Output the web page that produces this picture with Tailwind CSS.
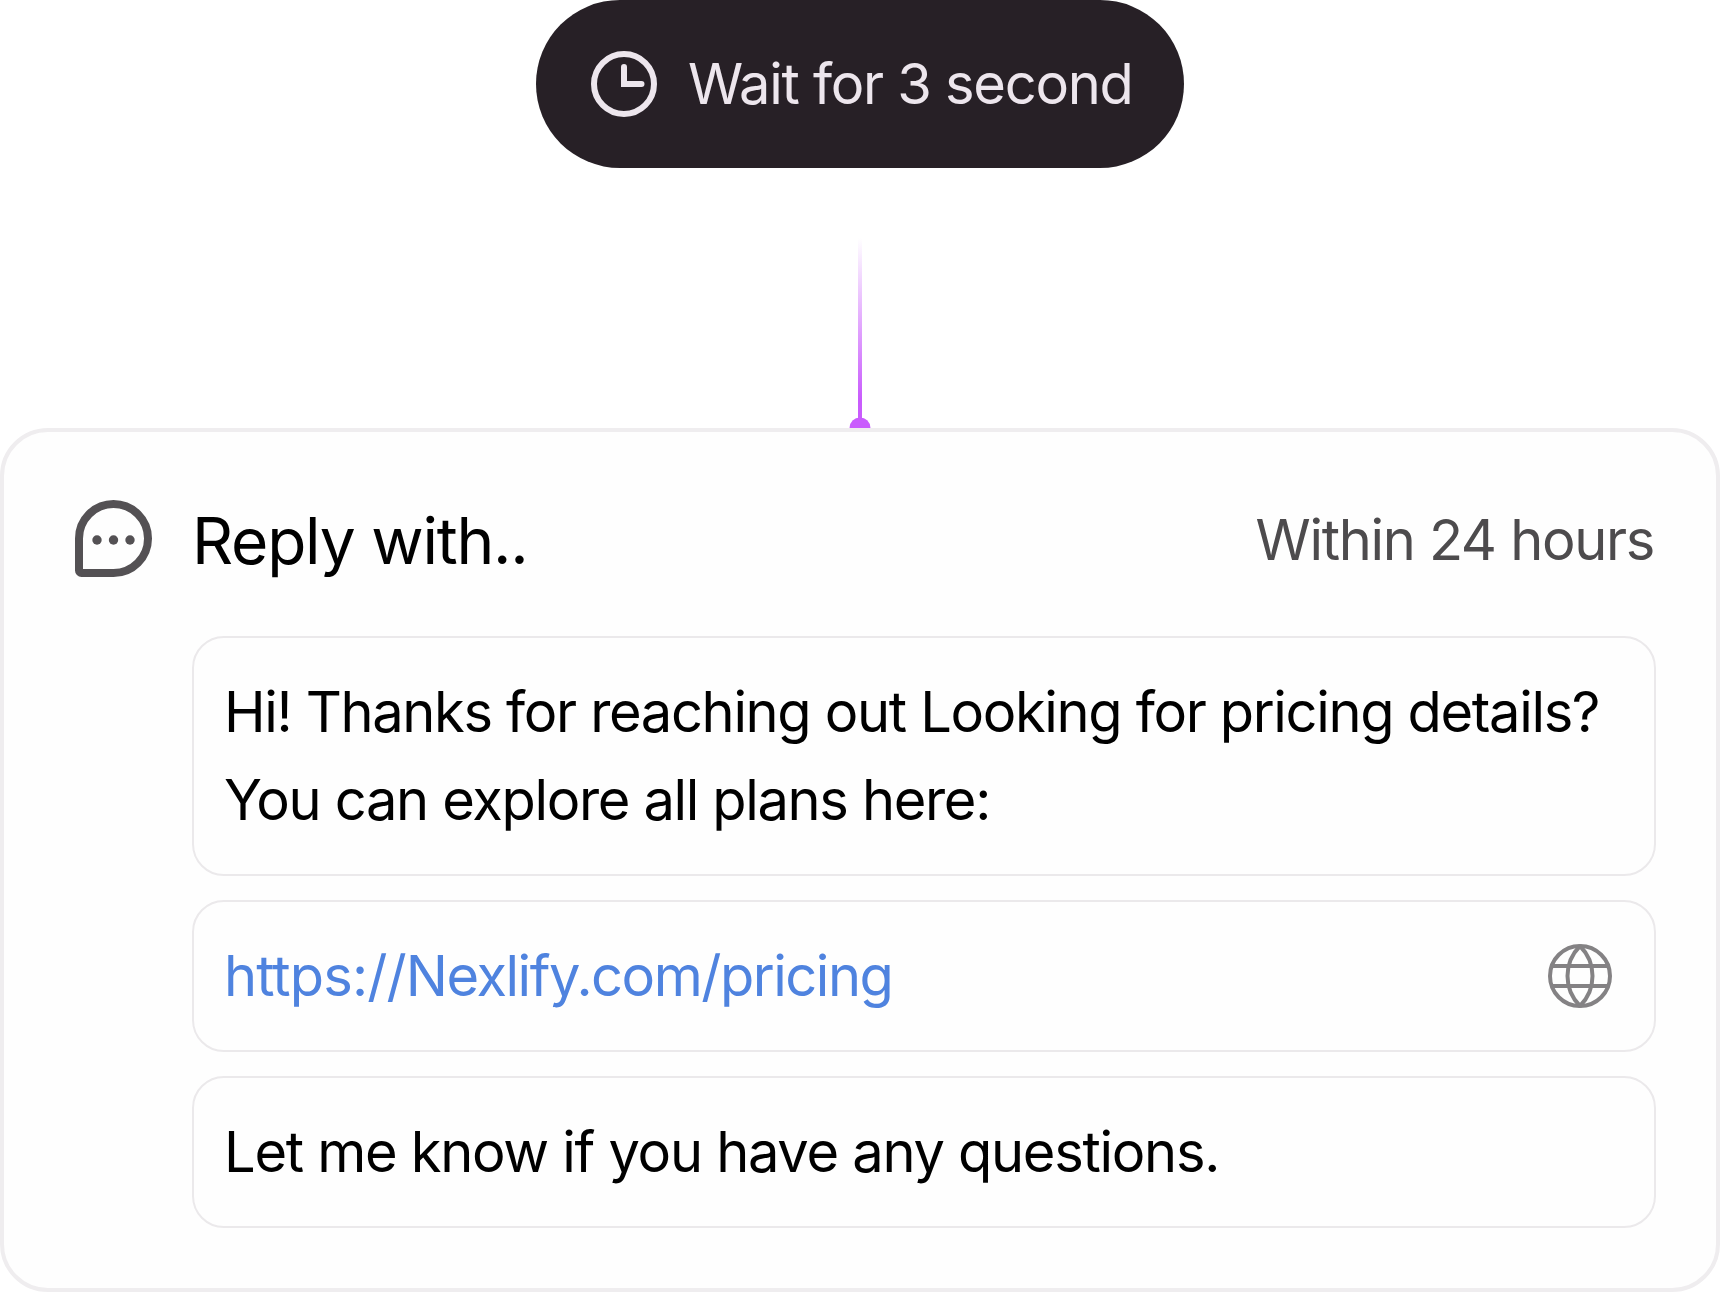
<!DOCTYPE html>
<html lang="en">
<head>
    <meta charset="UTF-8">
    <meta name="viewport" content="width=device-width, initial-scale=1.0">
    <title>Auto reply flow</title>
    <script src="https://cdn.jsdelivr.net/npm/@tailwindcss/browser@4"></script>
</head>
<body class="bg-white font-['Inter',sans-serif] text-[56px] leading-[88px] tracking-[-0.024em] text-black">
    <div class="flex h-[1292px] w-[1720px] flex-col items-center overflow-hidden">
        <!-- Delay step -->
        <div class="flex h-[168px] w-[648px] shrink-0 items-center rounded-full bg-[#272026] pl-[55px] text-[#ede6ed]">
            <svg class="size-[66px] shrink-0" viewBox="0 0 66 66" fill="none" stroke="currentColor" stroke-width="6">
                <circle cx="33" cy="33" r="30"/>
                <path d="M33 16v17h17.500" stroke-linecap="round" stroke-linejoin="miter"/>
            </svg>
            <span class="ml-[31px] whitespace-nowrap tracking-[-0.023em]">Wait for 3 second</span>
        </div>

        <!-- Connector -->
        <div class="mt-[70px] flex h-[190px] shrink-0 flex-col items-center">
            <div class="w-1 flex-1 bg-linear-to-b from-[#c95cfd]/0 to-[#c95cfd] to-90%"></div>
            <svg class="h-[11px] w-[22px]" viewBox="0 0 22 11" fill="#c95cfd">
                <path d="M0.500 11a10.500 10.500 0 0 1 21 0z"/>
                <path d="M9 0h4v3h-4z"/>
            </svg>
        </div>

        <!-- Reply step -->
        <div class="flex w-full flex-1 flex-col rounded-[48px] border-4 border-[#efedef] bg-[#fefefe] pr-[60px] pl-[71px]">
            <div class="mt-[64px] flex h-[88px] items-center">
                <svg class="mb-[3px] size-[77px] shrink-0" viewBox="0 0 77 77" fill="none">
                    <path d="M4 38.500a34.500 34.500 0 1 1 34.500 34.500H6.500a2.500 2.500 0 0 1-2.500-2.500z" stroke="#545154" stroke-width="8"/>
                    <g fill="#545154">
                        <circle cx="22" cy="40" r="4.700"/>
                        <circle cx="38.500" cy="40" r="4.700"/>
                        <circle cx="55" cy="40" r="4.700"/>
                    </g>
                </svg>
                <h2 class="ml-10 pt-0.5 text-[64px] tracking-[-0.019em]">Reply with..</h2>
                <span class="mr-0.5 ml-auto text-[#4d4b4d] tracking-[-0.0235em]">Within 24 hours</span>
            </div>

            <div class="mt-[52px] ml-[117px] flex flex-col gap-6">
                <div class="rounded-[32px] border-2 border-[#ebe9eb] px-[30px] py-[30px] whitespace-nowrap">
                    Hi! Thanks for reaching out Looking for pricing details?<br>
                    You can explore all plans here:
                </div>
                <div class="flex items-center justify-between rounded-[32px] border-2 border-[#ebe9eb] py-[30px] pr-[42px] pl-[30px]">
                    <a class="text-[#4f83df]"><span class="tracking-[-0.0155em]">https://</span><span class="tracking-[-0.0265em]">Nexlify.com/pricing</span></a>
                    <svg class="size-16" viewBox="0 0 64 64" fill="none" stroke="#848284" stroke-width="4">
                        <circle cx="32" cy="32" r="30"/>
                        <path d="M4 22h56M4 42h56"/>
                        <path d="M32 2C24 10 19.500 21 19.500 32S24 54 32 62M32 2C40 10 44.500 21 44.500 32S40 54 32 62"/>
                    </svg>
                </div>
                <div class="rounded-[32px] border-2 border-[#ebe9eb] px-[30px] py-[30px] tracking-[-0.023em]">Let me know if you have any questions.</div>
            </div>
        </div>
    </div>
</body>
</html>
